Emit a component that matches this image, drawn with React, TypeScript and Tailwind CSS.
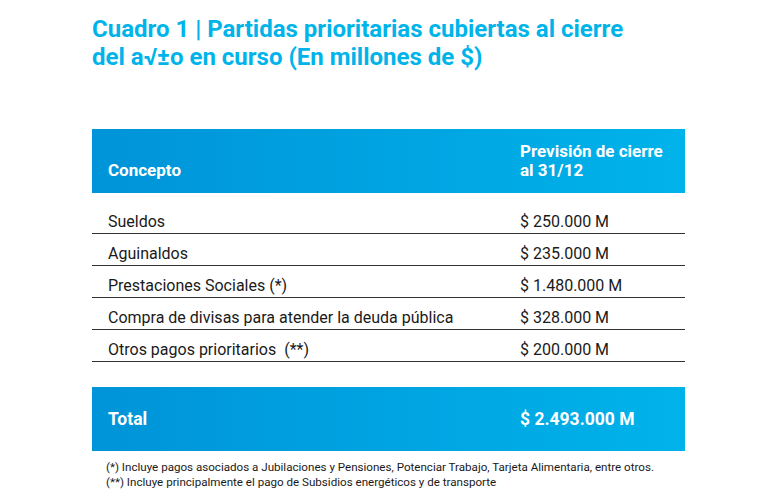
const rows = [
  { concepto: "Sueldos", monto: "$ 250.000 M" },
  { concepto: "Aguinaldos", monto: "$ 235.000 M" },
  { concepto: "Prestaciones Sociales (*)", monto: "$ 1.480.000 M" },
  { concepto: "Compra de divisas para atender la deuda pública", monto: "$ 328.000 M" },
  { concepto: "Otros pagos prioritarios  (**)", monto: "$ 200.000 M" },
];

export default function App() {
  return (
    <div className="w-[783px] h-[503px] bg-white overflow-hidden font-['Roboto',sans-serif]">
      <div className="ml-[92px] w-[593px]">
        {/* Título */}
        <h1 className="pt-[15px] text-[24px] leading-[28px] font-bold text-[#00b4ea] whitespace-pre">
          {"Cuadro 1 | Partidas prioritarias cubiertas al cierre\ndel a√±o en curso (En millones de $)"}
        </h1>

        {/* Cabecera */}
        <div className="mt-[58px] h-[64px] flex bg-gradient-to-r from-[#0094d8] to-[#00b3ea] text-white font-bold text-[17px] leading-[19px]">
          <div className="w-[428px] pl-[16px] flex items-end pb-[13px]">Concepto</div>
          <div className="flex-1 pt-[13px]">
            Previsión de cierre
            <br />
            al 31/12
          </div>
        </div>

        {/* Filas */}
        <div className="mt-[9px]">
          {rows.map((r) => (
            <div
              key={r.concepto}
              className="h-[32px] flex items-end leading-[22px] border-b-[1.5px] border-[#333333] text-[16px] text-[#1a1a1a] whitespace-pre"
            >
              <div className="w-[428px] pl-[16px]">{r.concepto}</div>
              <div className="flex-1">{r.monto}</div>
            </div>
          ))}
        </div>

        {/* Total */}
        <div className="mt-[25px] h-[64px] flex items-center bg-gradient-to-r from-[#0094d8] to-[#00b3ea] text-white font-bold text-[17.5px]">
          <div className="w-[428px] pl-[16px]">Total</div>
          <div className="flex-1">$ 2.493.000 M</div>
        </div>

        {/* Notas */}
        <div className="mt-[9px] pl-[14px] text-[11.6px] leading-[15px] text-[#1a1a1a]">
          <p>(*) Incluye pagos asociados a Jubilaciones y Pensiones, Potenciar Trabajo, Tarjeta Alimentaria, entre otros.</p>
          <p>(**) Incluye principalmente el pago de Subsidios energéticos y de transporte</p>
        </div>
      </div>
    </div>
  );
}
